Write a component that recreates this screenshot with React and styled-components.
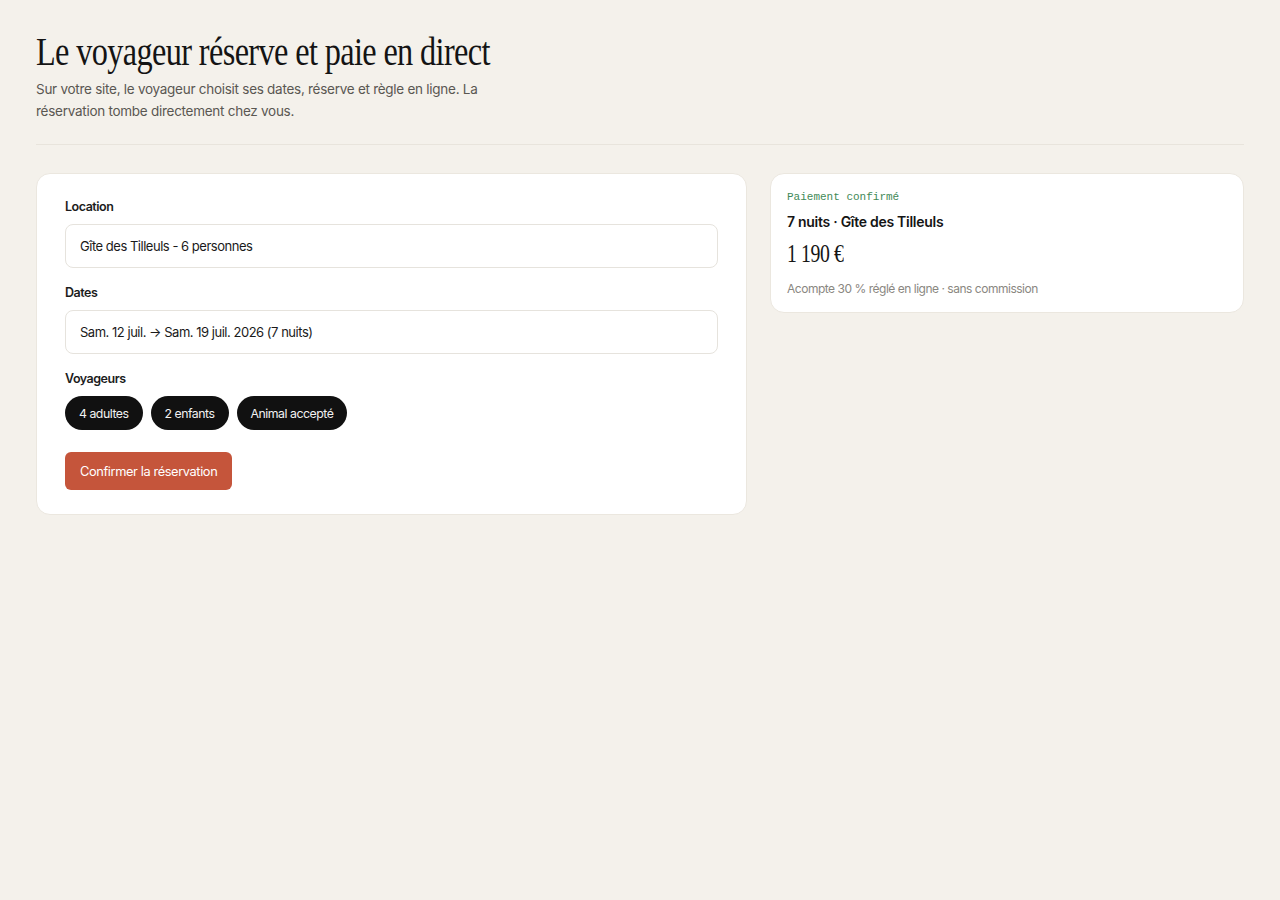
import React from 'react';
import styled, { createGlobalStyle } from 'styled-components';

const GlobalStyle = createGlobalStyle`
  html, body {
    margin: 0;
    padding: 0;
    background: #f4f1eb;
  }
  body {
    font-family: Inter, "Noto Sans", sans-serif;
    color: #151515;
    letter-spacing: -0.03em;
    -webkit-font-smoothing: antialiased;
  }
  * { box-sizing: border-box; }
`;

const Page = styled.main`
  padding: 28px 36px 40px;
  min-height: 900px;
`;

const Header = styled.header`
  padding-bottom: 22px;
  border-bottom: 1px solid #e8e4dc;
`;

const Title = styled.h1`
  margin: 0;
  font-family: "Liberation Serif", "DejaVu Serif", serif;
  font-weight: 400;
  font-size: 41px;
  line-height: 46px;
  letter-spacing: -0.8px;
  color: #141414;
`;

/* narrow display face: squeeze the serif horizontally */
const Condensed = styled.span`
  display: inline-block;
  transform: scaleX(${p => p.$x || 0.8});
  transform-origin: left center;
  white-space: nowrap;
`;

const Lead = styled.p`
  margin: 4px 0 0;
  max-width: 470px;
  font-size: 13.5px;
  line-height: 22px;
  letter-spacing: -0.02em;
  color: #5a5752;
`;

const Layout = styled.section`
  display: grid;
  grid-template-columns: 3fr 2fr;
  gap: 23px;
  align-items: start;
  margin-top: 28px;
`;

const Card = styled.div`
  background: #fff;
  border: 1px solid #ebe7df;
  border-radius: 14px;
  padding: ${p => p.$pad || '24px 28px'};
`;

const Field = styled.div`
  margin-bottom: 16px;
`;

const Label = styled.div`
  font-size: 12.5px;
  font-weight: 600;
  line-height: 18px;
  color: #1c1c1c;
  margin-bottom: 8px;
`;

const Input = styled.div`
  height: 44px;
  display: flex;
  align-items: center;
  padding: 0 14px;
  border: 1px solid #e6e3dd;
  border-radius: 8px;
  font-size: 13px;
  color: #1a1a1a;
`;

const Chips = styled.div`
  display: flex;
  gap: 8px;
`;

const Chip = styled.span`
  height: 34px;
  display: inline-flex;
  align-items: center;
  padding: 0 14px;
  border-radius: 17px;
  background: #111;
  color: #f2f2f2;
  font-size: 12.3px;
`;

const Button = styled.button`
  margin-top: 22px;
  height: 38px;
  padding: 0 15px;
  border: none;
  border-radius: 6px;
  background: #c5553b;
  color: #fff;
  font-family: Inter, sans-serif;
  font-size: 12.8px;
  letter-spacing: -0.03em;
  cursor: pointer;
`;

const Status = styled.div`
  font-family: "Liberation Mono", "DejaVu Sans Mono", monospace;
  font-size: 11px;
  line-height: 14px;
  letter-spacing: 0;
  color: #3f8a57;
`;

const Stay = styled.div`
  margin-top: 9px;
  font-size: 14px;
  font-weight: 600;
  line-height: 18px;
  letter-spacing: -0.02em;
  color: #151515;
`;

const Price = styled.div`
  margin-top: 8px;
  font-family: "Liberation Serif", "DejaVu Serif", serif;
  font-size: 26px;
  line-height: 30px;
  letter-spacing: -0.5px;
  color: #151515;
`;

const Note = styled.div`
  margin-top: 12px;
  font-size: 12px;
  line-height: 16px;
  color: #8a8781;
`;

export default function App() {
  const guests = ['4 adultes', '2 enfants', 'Animal accepté'];

  return (
    <>
      <GlobalStyle />
      <Page>
        <Header>
          <Title>
            <Condensed $x={0.788}>Le voyageur réserve et paie en direct</Condensed>
          </Title>
          <Lead>
            Sur votre site, le voyageur choisit ses dates, réserve et règle en ligne. La
            réservation tombe directement chez vous.
          </Lead>
        </Header>

        <Layout>
          <Card>
            <Field>
              <Label>Location</Label>
              <Input>Gîte des Tilleuls - 6 personnes</Input>
            </Field>
            <Field>
              <Label>Dates</Label>
              <Input>Sam. 12 juil. → Sam. 19 juil. 2026 (7 nuits)</Input>
            </Field>
            <Label>Voyageurs</Label>
            <Chips>
              {guests.map(g => <Chip key={g}>{g}</Chip>)}
            </Chips>
            <Button>Confirmer la réservation</Button>
          </Card>

          <Card $pad="16px 16px 15px">
            <Status>Paiement confirmé</Status>
            <Stay>7 nuits · Gîte des Tilleuls</Stay>
            <Price>
              <Condensed $x={0.76}>1 190 €</Condensed>
            </Price>
            <Note>Acompte 30 % réglé en ligne · sans commission</Note>
          </Card>
        </Layout>
      </Page>
    </>
  );
}
